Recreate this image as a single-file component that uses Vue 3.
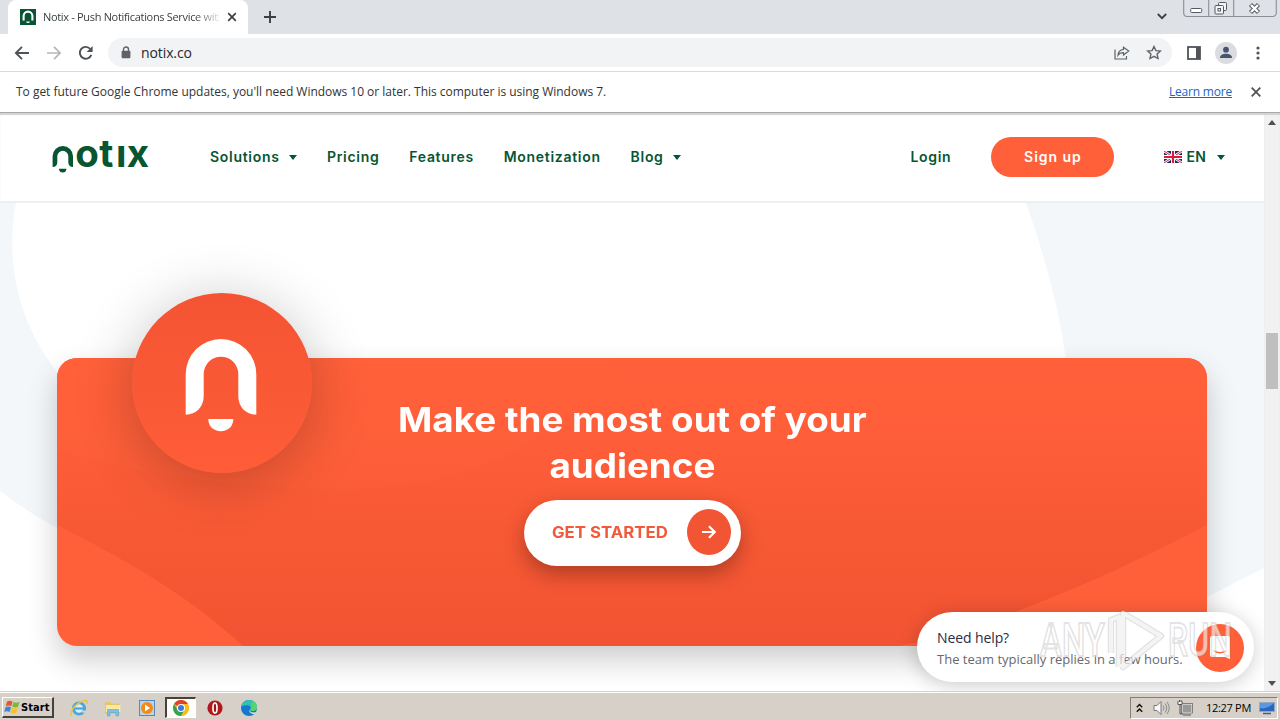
<script setup>
const links = [
  { text: 'Solutions', menu: true },
  { text: 'Pricing' },
  { text: 'Features' },
  { text: 'Monetization' },
  { text: 'Blog', menu: true },
]
</script>

<template>
  <div class="screen">
    <div class="tabstrip">
      <div class="tab">
        <svg class="favicon" width="16" height="16" viewBox="0 0 16 16">
          <rect width="16" height="16" fill="#075532" />
          <path d="M3.6 11.6V7a4.4 4.4 0 0 1 8.8 0v4.6" fill="none" stroke="#fff" stroke-width="2.1" />
          <path d="M6.2 12.6h3.6a1.8 1.5 0 0 1-3.6 0z" fill="#fff" />
        </svg>
        <span class="tab-title">Notix - Push Notifications Service with</span>
        <svg width="10" height="10" viewBox="0 0 10 10"><path d="M1.2 1.2l7.6 7.6M8.8 1.2L1.2 8.8" stroke="#3c4043" stroke-width="1.7" /></svg>
      </div>
      <svg class="plus" width="12" height="12" viewBox="0 0 12 12"><path d="M6 0v12M0 6h12" stroke="#3c4043" stroke-width="1.9" /></svg>
      <svg class="tab-search" width="10" height="7" viewBox="0 0 10 7"><path d="M.8 1l4.2 4.2L9.200 1" fill="none" stroke="#3c4043" stroke-width="1.8" /></svg>
      <svg class="winctl" width="94" height="18" viewBox="0 0 94 18">
        <path d="M.7 0v13a3.500 3.500 0 0 0 3.500 3.500h85.600a3.500 3.500 0 0 0 3.500-3.500V0M25.700 0v16.500M50.700 0v16.500" fill="none" stroke="#8b8f96" stroke-width="1.100" />
        <rect x="7.700" y="8.500" width="11" height="4" rx="1" fill="#fff" stroke="#555a62" />
        <g fill="#f4f5f7" stroke="#555a62"><rect x="35.500" y="2.500" width="8" height="8" rx="1" /><rect x="32" y="5.500" width="8.500" height="8.500" rx="1" /><rect x="35" y="8.500" width="2.500" height="2.500" /></g>
        <path d="M67.500 4.500l8 8M75.500 4.500l-8 8" stroke="#555a62" stroke-width="4.400" />
        <path d="M68 5l7 7M75 5l-7 7" stroke="#fff" stroke-width="2.400" />
      </svg>
    </div>

    <div class="toolbar">
      <svg class="back" width="16" height="14" viewBox="0 0 16 14"><path d="M15 7H2M8 .900L1.900 7 8 13.100" fill="none" stroke="#4f5358" stroke-width="1.900" /></svg>
      <svg class="fwd" width="16" height="14" viewBox="0 0 16 14"><path d="M1 7h13M8 .900L14.100 7 8 13.100" fill="none" stroke="#b4b6b9" stroke-width="1.700" /></svg>
      <svg class="reload" width="16" height="16" viewBox="0 0 16 16"><path d="M13.300 9.800A5.900 5.900 0 1 1 12.300 4" fill="none" stroke="#4f5358" stroke-width="1.900" /><path d="M14.600 1v6H8.600z" fill="#4f5358" /></svg>
      <div class="omnibox">
        <svg width="10" height="13" viewBox="0 0 10 13"><path d="M2.500 6V3.500a2.500 2.500 0 0 1 5 0V6" fill="none" stroke="#5f6368" stroke-width="1.400" /><rect x=".6" y="4.800" width="8.800" height="7.400" rx="1" fill="#5f6368" /></svg>
        <span class="url">notix.co</span>
        <svg class="share" width="16" height="14" viewBox="0 0 16 14"><path d="M1 3.500v9.500h11.500v-3" fill="none" stroke="#5f6368" stroke-width="1.200" /><path d="M9.500 1.200L14.700 5 9.500 9V6.700C7 6.700 5.300 7.300 4 9.200 4.300 6 6.300 3.800 9.500 3.400z" fill="none" stroke="#5f6368" stroke-width="1.200" /></svg>
        <svg width="16" height="15" viewBox="0 0 16 15"><path d="M8 1.500l1.900 4.100 4.500.5-3.300 3 .9 4.400L8 11.300l-4 2.200.9-4.400-3.300-3 4.500-.5z" fill="none" stroke="#5f6368" stroke-width="1.400" /></svg>
      </div>
      <svg class="panel" width="14" height="14" viewBox="0 0 14 14"><rect x="1" y="1" width="12" height="12" fill="none" stroke="#505358" stroke-width="1.800" /><path d="M9 1h4v12H9z" fill="#505358" /></svg>
      <svg class="avatar" width="22" height="22" viewBox="0 0 22 22"><circle cx="11" cy="11" r="11" fill="#dadce0" /><circle cx="11" cy="7.700" r="2.900" fill="#47536f" /><path d="M5 16c0-3.200 3-4.200 6-4.200s6 1 6 4.200z" fill="#47536f" /></svg>
      <svg class="kebab" width="4" height="14" viewBox="0 0 4 14"><g fill="#505358"><circle cx="2" cy="2" r="1.600" /><circle cx="2" cy="7" r="1.600" /><circle cx="2" cy="12" r="1.600" /></g></svg>
    </div>

    <div class="infobar">
      <span class="info-text">To get future Google Chrome updates, you'll need Windows 10 or later. This computer is using Windows 7.</span>
      <a class="learn">Learn more</a>
      <svg width="10" height="10" viewBox="0 0 10 10"><path d="M.7.7l8.600 8.600M9.300.7L.7 9.300" stroke="#505358" stroke-width="1.800" /></svg>
    </div>

    <div class="view">
      <div class="page">
        <header class="site-head">
          <svg class="logo" width="104" height="36" viewBox="0 0 104 36">
            <path d="M.6 28V17.300a10.200 10.200 0 0 1 20.400 0V28c-2.900 0-4.700-1.900-4.700-4.600v-6.100a5.500 5.500 0 0 0-11 0V23.400c0 2.700-1.800 4.600-4.700 4.600z" fill="#075532" />
            <path d="M7 29.800h7.400a3.700 3.700 0 0 1-7.400 0z" fill="#075532" />
            <text class="wordmark" x="23.200 47.200 63.900 74.800" y="28">otıx</text>
          </svg>
          <nav class="nav">
            <a v-for="l in links" :key="l.text">{{ l.text }}<i v-if="l.menu" class="caret"></i></a>
          </nav>
          <a class="login">Login</a>
          <a class="signup">Sign up</a>
          <div class="lang">
            <svg width="18" height="12" viewBox="0 0 18 12">
              <rect width="18" height="12" fill="#1d2a6b" />
              <path d="M0 0l18 12M18 0L0 12" stroke="#fff" stroke-width="2.600" />
              <path d="M0 0l18 12M18 0L0 12" stroke="#d2203c" stroke-width="1" />
              <path d="M9 0v12M0 6h18" stroke="#fff" stroke-width="4" />
              <path d="M9 0v12M0 6h18" stroke="#d2203c" stroke-width="2.200" />
            </svg>
            <span>EN</span><i class="caret"></i>
          </div>
        </header>

        <main class="hero">
          <svg class="shapes" width="1264" height="489" viewBox="0 203 1264 489">
            <rect y="203" width="1264" height="489" fill="#f3f7f9" />
            <path d="M16 203C8 245 9 310 57 372L200 480H1070C1076 380 1060 300 1026 203z" fill="#fff" />
            <path d="M0 491C20 506 38 518 57 528L243 646H1040L1207 597 1264 568V692H0z" fill="#fff" />
          </svg>
          <section class="card">
            <svg class="card-bg" width="1150" height="288" viewBox="57 358 1150 288">
              <defs>
                <linearGradient id="band" x1="0" y1="358" x2="0" y2="646" gradientUnits="userSpaceOnUse">
                  <stop offset="0" stop-color="#ff603a" /><stop offset=".22" stop-color="#ff5e39" /><stop offset=".75" stop-color="#f55733" /><stop offset="1" stop-color="#f25433" />
                </linearGradient>
              </defs>
              <rect x="57" y="358" width="1150" height="288" fill="#ff603a" />
              <path d="M57 358H1207V525C1160 549 1100 580 1020 610 985 625 940 638 900 646H243C180 588 115 555 57 525z" fill="url(#band)" />
              <path d="M57 358V450C150 478 250 489 350 489 470 486 560 445 620 358z" fill="#ff633b" opacity=".32" />
            </svg>
            <div class="badge">
              <svg width="72" height="94" viewBox="185 338 72 94">
                <path d="M185.700 414.700V374.300a35.300 35.300 0 0 1 70.600 0V414.700C246 414.700 238.300 407 238.300 396V374a17.300 17.300 0 0 0-34.600 0V396C203.700 407 196 414.700 185.700 414.700z" fill="#fff" />
                <path d="M208.300 419h25c0 7.500-5.500 12.200-12.500 12.200s-12.500-4.700-12.500-12.200z" fill="#fff" />
              </svg>
            </div>
            <h2>Make the most out of your<br />audience</h2>
            <a class="cta">
              <span>GET STARTED</span>
              <b class="cta-dot"><svg width="14" height="14" viewBox="0 0 14 14"><path d="M0 7h12.500M7 1.300L12.700 7 7 12.700" fill="none" stroke="#fff" stroke-width="2.200" /></svg></b>
            </a>
          </section>

          <aside class="chat">
            <div class="chat-text"><p class="q">Need help?</p><p class="r">The team typically replies in a few hours.</p></div>
            <div class="chat-dot">
              <svg width="22" height="24" viewBox="0 0 22 24"><path d="M3 0h16a2 2 0 0 1 2 2v21l-5-2H3a2 2 0 0 1-2-2V2a2 2 0 0 1 2-2z" fill="#fff" /><path d="M4.500 14.500c3.500 3 9.500 3 13 0" fill="none" stroke="#ff5f39" stroke-width="1.400" /></svg>
            </div>
          </aside>
          <svg class="watermark" width="204" height="66" viewBox="1036 608 204 66">
            <g class="wm-text"><text x="1040" y="655.500" textLength="65" lengthAdjust="spacingAndGlyphs">ANY</text><text x="1168" y="655.500" textLength="64" lengthAdjust="spacingAndGlyphs">RUN</text></g>
            <g fill="none" stroke-linejoin="round"><path d="M1111 653V620l8-3v50M1123 613l38 23-38 31z" stroke="#909090" stroke-opacity=".26" stroke-width="6.500" /><path d="M1111 653V620l8-3v50M1123 613l38 23-38 31z" stroke="#fff" stroke-opacity=".62" stroke-width="4" /></g>
          </svg>
        </main>
      </div>
      <div class="scroll">
        <svg width="8" height="5" viewBox="0 0 8 5"><path d="M0 5L4 0l4 5z" fill="#505050" /></svg>
        <div class="thumb"></div>
        <svg class="down" width="8" height="5" viewBox="0 0 8 5"><path d="M0 0l4 5 4-5z" fill="#505050" /></svg>
      </div>
    </div>

    <footer class="taskbar">
      <div class="start">
        <svg width="17" height="16" viewBox="0 0 17 16"><path d="M3 2.500c2-1.200 3.700-1 5.500.1L7.300 7.300c-1.800-1-3.500-1.200-5.500-.1z" fill="#e8562a" /><path d="M9.400 3c2 1.100 3.700 1 6-.2l-1.300 4.900c-2 1.100-3.900 1.100-5.900 0z" fill="#7db83a" /><path d="M1.500 8.200c2-1.100 3.700-.9 5.500.1L5.700 13c-1.700-1-3.500-1.200-5.400-.1z" fill="#3f83d6" /><path d="M7.900 8.700c2 1.100 3.800 1 6-.1l-1.300 4.800c-2.100 1.200-4 1.100-6 0z" fill="#f6c32c" /></svg>
        <span>Start</span>
      </div>
      <div class="quick">
        <svg width="18" height="18" viewBox="0 0 18 18"><circle cx="9" cy="9.500" r="5.600" fill="#d9f0fb" stroke="#4aa6df" stroke-width="2.900" /><path d="M4 9.500h10.500" stroke="#4aa6df" stroke-width="2.200" /><path d="M12 11.500h5v2.200h-5z" fill="#d4d0c8" /><path d="M1.500 16.500C-1 12 8 1.500 16.500 1.500c1.200.5.600 2.500 0 3.500" fill="none" stroke="#edc53a" stroke-width="1.600" /></svg>
        <svg width="18" height="18" viewBox="0 0 18 18"><path d="M1 3h5.500l1 1.500H16V15H1z" fill="#e3c765" /><path d="M2 6h14.500V13H2z" fill="#f9e9a6" /><path d="M3.500 17v-6.500h11V17H12v-3.500H6V17z" fill="#7dc0e4" stroke="#5aa2cf" stroke-width=".6" /></svg>
        <svg width="18" height="18" viewBox="0 0 18 18"><rect x="1.500" y="1.500" width="15" height="15" fill="#b9d5ee" stroke="#5588bb" /><circle cx="9" cy="9" r="6" fill="#f28a16" /><path d="M7 5.500l5 3.500-5 3.500z" fill="#fff" /></svg>
        <span class="active">
          <svg width="16" height="16" viewBox="0 0 16 16"><circle cx="8" cy="8" r="8" fill="#f9bd1a" /><path d="M8 8L1.100 4A8 8 0 0 1 14.900 4H8z" fill="#e0412f" /><path d="M1.100 4A8 8 0 0 0 8 16l3.500-6L8 8 4.500 10z" fill="#33a351" /><path d="M8 4h6.900A8 8 0 0 1 8 16l3.500-6z" fill="#f9bd1a" /><circle cx="8" cy="8" r="4" fill="#fff" /><circle cx="8" cy="8" r="3" fill="#3b79e6" /></svg>
        </span>
        <svg width="18" height="18" viewBox="0 0 18 18"><circle cx="9" cy="9" r="7.600" fill="#b3161b" /><ellipse cx="9" cy="9" rx="2" ry="5" fill="#a01015" stroke="#fff" stroke-width="1.700" /></svg>
        <svg width="18" height="18" viewBox="0 0 18 18"><circle cx="9" cy="9" r="8" fill="#1478cd" /><path d="M1.200 7.500C2 3.500 5.500 1 9 1c5 0 8 3.500 8 7 0 3-2.500 4-4.500 4-1.500 0-2.500-.8-2-1.700 1-2-.5-4-3.500-4-2.500 0-4.800.6-5.800 1.200z" fill="#35c1b2" /><path d="M12 2c3.500 1.300 5 4 5 6.200 0 2.500-2 3.800-4.500 3.800-1.500 0-2.500-.8-2-1.700C12 8 11 5 12 2z" fill="#59d36b" /><path d="M9.500 10.500c.5 3 4 3.500 7 2.200-.6 1.400-1.200 2-2 2.600-3.500 0-6-2-5-4.800z" fill="#d6d0c8" /></svg>
      </div>
      <div class="tray">
        <svg width="7" height="10" viewBox="0 0 7 10"><path d="M.8 4.200l2.700-2.700 2.700 2.700M.8 8.700L3.500 6l2.700 2.700" fill="none" stroke="#111" stroke-width="1.500" /></svg>
        <svg class="vol" width="17" height="16" viewBox="0 0 17 16"><path d="M1 5.500h3L8 1.500v13l-4-4H1z" fill="#f7f7f7" stroke="#77787a" /><path d="M10 5.500q2 2.500 0 5M12 3.500q3.500 4.500 0 9M14 2q4.500 6 0 12" fill="none" stroke="#8b8c8e" /></svg>
        <svg class="net" width="16" height="16" viewBox="0 0 16 16"><rect x="5" y="4" width="10" height="8.500" fill="#999" stroke="#f7f7f7" /><rect x="4.500" y="3.500" width="11" height="9.500" fill="none" stroke="#555" stroke-width=".7" /><path d="M6 15h8" stroke="#555" /><path d="M1 1v3.500h4V1z" fill="#f7f7f7" /><path d="M1 1v3.500h4V1M3 4.500V14h3M2.500 0v2M4 0v2" fill="none" stroke="#555" /></svg>
        <span class="clock">12:27 PM</span>
        <svg width="16" height="14" viewBox="0 0 16 14"><rect x=".5" y="1.500" width="15" height="9" fill="#2a66bd" stroke="#8da9cc" /><path d="M1 7q7 2 14-5V2H1z" fill="#5b98df" /><path d="M4 12.500h8" stroke="#395f91" stroke-width="1.500" /></svg>
      </div>
    </footer>
  </div>
</template>

<style>
body { overflow: hidden; }
</style>

<style scoped>
.screen { width: 1280px; height: 720px; display: flex; flex-direction: column; overflow: hidden; background: #fff; font-family: "Open Sans", "Noto Sans", sans-serif; color: #333; }
svg { display: block; flex: none; }
p, h2 { margin: 0; }

.tabstrip { height: 34px; background: #dee1e6; display: flex; align-items: flex-start; padding-left: 8px; }
.tab { width: 240px; height: 34px; box-sizing: border-box; background: #fff; border-radius: 8px 8px 0 0; display: flex; align-items: center; padding: 0 11px 0 12px; }
.favicon { margin-right: 7px; }
.tab-title { width: 176px; margin-right: 8px; font-size: 11px; letter-spacing: -.32px; line-height: 16px; white-space: nowrap; overflow: hidden; color: #3c4043; mask-image: linear-gradient(90deg, #000 86%, transparent 102%); }
.tab-title + svg { margin-left: auto; }
.plus { margin: 11px 0 0 16px; }
.tab-search { margin: 13px 16px 0 auto; }
.winctl { margin-right: 3px; }

.toolbar { height: 37px; border-bottom: 1px solid #d8dadd; display: flex; align-items: center; padding: 0 20px 0 14px; }
.fwd { margin-left: 16px; }
.reload { margin-left: 16px; }
.omnibox { margin-left: 14px; width: 1064px; height: 29px; box-sizing: border-box; border-radius: 15px; background: #f1f3f4; display: flex; align-items: center; padding: 0 10px 0 13px; }
.url { margin-left: 10px; font-size: 14px; letter-spacing: -.1px; color: #26282b; }
.share { margin: 0 16px 0 auto; }
.panel { margin-left: 15px; }
.avatar { margin-left: 14px; }
.kebab { margin-left: 19px; }

.infobar { height: 40px; display: flex; align-items: center; padding: 0 19px 0 16px; font-size: 12px; border-bottom: 1px solid #a9a9a9; }
.info-text { letter-spacing: -.02px; white-space: nowrap; color: #333; padding-bottom: 2px; }
.learn { margin: 0 19px 0 auto; letter-spacing: -.2px; color: #1a66c2; text-decoration: underline; padding-bottom: 2px; }

.view { height: 579px; display: flex; box-sizing: border-box; box-shadow: inset 0 2px 1px #d2d2d2; }
.page { width: 1264px; display: flex; flex-direction: column; overflow: hidden; }
.site-head { height: 88px; flex: none; border-bottom: 2px solid #eef0f0; display: flex; align-items: center; padding: 0 39px 0 52px; font-family: Inter, "Open Sans", sans-serif; font-size: 14px; font-weight: 600; letter-spacing: .7px; color: #075532; }
.wordmark { font-family: Inter, sans-serif; font-size: 38.5px; font-weight: 700; letter-spacing: 0; fill: #075532; }
.nav { display: flex; gap: 29.9px; margin-left: 54px; padding-bottom: 2px; }
.nav a { display: flex; align-items: center; }
.caret { width: 0; height: 0; border: solid transparent; border-width: 5px 4.700px 0; border-top-color: #075532; margin-left: 9.500px; position: relative; top: 1px; }
.login { margin-left: auto; padding-bottom: 2px; }
.signup { margin-left: 40px; width: 123px; height: 40px; border-radius: 20px; background: #ff5f39; color: #fff; text-align: center; line-height: 39px; letter-spacing: .95px; }
.lang { margin-left: 50px; display: flex; align-items: center; letter-spacing: .5px; gap: 4px; padding-bottom: 1px; }
.lang .caret { margin-left: 6.500px; }

.hero { position: relative; flex: 1; }
.shapes { position: absolute; inset: 0; }
.card { position: relative; margin: 155px 0 0 57px; width: 1150px; height: 288px; border-radius: 20px; box-shadow: 0 14px 30px rgba(0, 0, 0, .2); display: flex; flex-direction: column; align-items: center; }
.card-bg { position: absolute; inset: 0; border-radius: 20px; }
.badge { position: absolute; left: 75px; top: -65px; width: 180px; height: 180px; border-radius: 50%; background: linear-gradient(#f45433, #ff5d38); box-shadow: 0 8px 60px rgba(0, 0, 0, .24); display: flex; align-items: center; justify-content: center; }
.badge svg { margin: 4px 2px 0 0; }
h2 { position: relative; margin-top: 39px; font-family: Inter, "Open Sans", sans-serif; font-size: 34px; font-weight: 700; line-height: 46px; color: #fff; text-align: center; white-space: nowrap; transform: scaleX(1.083); }
.cta { position: relative; margin-top: 11px; width: 217px; height: 66px; box-sizing: border-box; border-radius: 33px; background: #fff; box-shadow: 0 8px 20px rgba(60, 20, 10, .38); display: flex; align-items: center; justify-content: space-between; padding: 0 10px 2px 28px; font-family: Inter, "Open Sans", sans-serif; font-size: 15.500px; font-weight: 700; color: #f05a3a; }
.cta span { transform: scaleX(1.083); transform-origin: left; }
.cta-dot { width: 44px; height: 46px; border-radius: 50%; background: #f25533; display: flex; align-items: center; justify-content: center; }

.chat { position: absolute; left: 917px; top: 409px; width: 337px; height: 70px; box-sizing: border-box; border-radius: 35px; background: #fff; box-shadow: 0 3px 20px rgba(0, 0, 0, .2); display: flex; align-items: center; justify-content: space-between; padding: 0 10px 0 20px; white-space: nowrap; }
.chat-text { padding-top: 3px; }
.q { font-size: 14px; line-height: 22px; letter-spacing: -.1px; color: #2d2c43; }
.r { font-size: 13px; line-height: 21px; color: #686870; }
.chat-dot { width: 48px; height: 48px; margin-top: 2px; border-radius: 50%; background: #ff5f39; display: flex; align-items: center; justify-content: center; }
.watermark { position: absolute; left: 1036px; top: 405px; overflow: visible; }
.wm-text { font-family: Roboto, "Liberation Sans", sans-serif; font-size: 46px; font-weight: 500; fill: #fff; fill-opacity: .62; stroke: #909090; stroke-opacity: .26; stroke-width: 2px; }

.scroll { width: 16px; background: #f1f1f1; display: flex; flex-direction: column; align-items: center; padding: 7px 0 6px; box-sizing: border-box; box-shadow: inset 0 2px 1px #d2d2d2; }
.thumb { width: 12px; height: 56px; margin-top: 208px; background: #bfbfbf; }
.down { margin-top: auto; }

.taskbar { height: 28px; box-sizing: border-box; border-top: 1px solid #fff; background: #d6d0c8; display: flex; align-items: center; padding: 2px 2px 0; box-shadow: 0 -1px #d6d0c8; position: relative; }
.start { width: 52px; height: 21px; box-sizing: border-box; display: flex; align-items: center; border: solid; border-width: 1px 2px 2px 1px; border-color: #fff #45423e #45423e #fff; font: bold 11px "DejaVu Sans Condensed", "DejaVu Sans", sans-serif; color: #000; padding-left: 1px; }
.start span { letter-spacing: .1px; }
.quick { display: flex; align-items: center; margin-left: 16px; gap: 16px; }
.active { width: 31px; height: 21px; box-sizing: border-box; margin: 0 -6px 0 -7px; border: solid; border-width: 2px 1px 1px 2px; border-color: #45423e #fff #fff #45423e; background: #fdfdfc; display: flex; align-items: center; justify-content: center; }
.tray { margin-left: auto; width: 148px; height: 22px; box-sizing: border-box; border: 1px solid; border-color: #858077 #fff #fff #858077; display: flex; align-items: center; padding: 0 2px 0 5px; }
.vol { margin-left: 10px; }
.net { margin-left: 7px; }
.clock { margin: 0 8px 0 auto; font-size: 11px; letter-spacing: -.3px; color: #000; white-space: nowrap; }
</style>
